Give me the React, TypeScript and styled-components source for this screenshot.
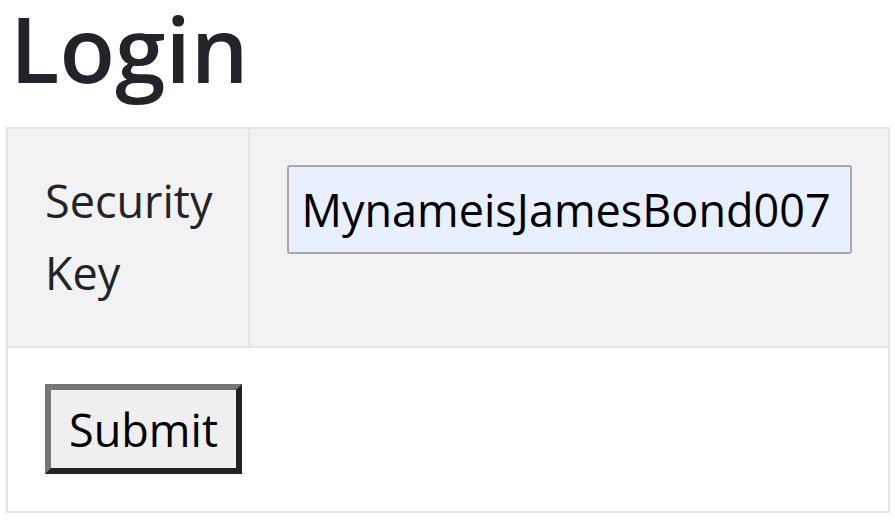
import React from "react";
import styled, { createGlobalStyle } from "styled-components";

const Global = createGlobalStyle`
  html, body { margin: 0; padding: 0; background: #ffffff; }
  body { font-family: "Open Sans", "Noto Sans", sans-serif; color: #212529; }
`;

const Page = styled.div`
  padding: 0 5px 0 6px;
`;

const Title = styled.h1`
  margin: -14px 0 0 0;
  padding: 0 0 17px 4px;
  font-size: 91px;
  font-weight: 600;
  line-height: 124px;
  color: #212529;
`;

const Table = styled.table`
  width: 882px;
  border-collapse: collapse;
  border: 2px solid #e1e4e8;
`;

const Row = styled.tr<{ $shade?: boolean }>`
  background: ${(p) => (p.$shade ? "#f2f2f2" : "#ffffff")};
`;

const Cell = styled.td<{ $w?: number }>`
  border: 2px solid #e1e4e8;
  padding: 36px 36px 37px 37px;
  font-size: 45px;
  line-height: 72px;
  vertical-align: top;
  width: ${(p) => (p.$w ? `${p.$w}px` : "auto")};
`;

const Input = styled.input`
  box-sizing: border-box;
  width: 565px;
  height: 89px;
  margin: 0;
  padding: 0 12px;
  border: 2px solid #a8a8a8;
  border-radius: 3px;
  background: #e8f0fe;
  font-family: "Open Sans", "Noto Sans", sans-serif;
  font-size: 45px;
  color: #000;
  outline: none;
`;

const Button = styled.button`
  box-sizing: border-box;
  width: 197px;
  height: 90px;
  margin: 0;
  padding: 0;
  border-width: 6px;
  border-style: solid;
  border-color: #767676 #222222 #222222 #767676;
  background: #efefef;
  font-family: "Open Sans", "Noto Sans", sans-serif;
  font-size: 45px;
  color: #000;
`;

export default function App() {
  return (
    <Page>
      <Global />
      <Title>Login</Title>
      <Table>
        <tbody>
          <Row $shade>
            <Cell $w={165}>Security Key</Cell>
            <Cell>
              <Input type="text" defaultValue="MynameisJamesBond007" />
            </Cell>
          </Row>
          <Row>
            <Cell colSpan={2}>
              <Button type="submit">Submit</Button>
            </Cell>
          </Row>
        </tbody>
      </Table>
    </Page>
  );
}
